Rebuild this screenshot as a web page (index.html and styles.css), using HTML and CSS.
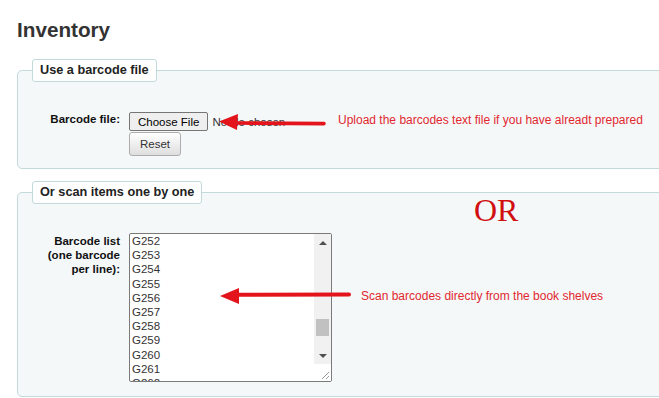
FILE: index.html
```html
<!DOCTYPE html>
<html>
<head>
<meta charset="utf-8"/>
<title>Inventory</title>
<link rel="stylesheet" href="styles.css">
</head>

<body>
<h1 class="page-title">Inventory</h1>

<fieldset class="box">
<legend>Use a barcode file</legend>
<div class="row">
   <label class="row-label" for="uploadbarcodes">Barcode file:</label>
   <div class="controls">
      <input type="file" id="uploadbarcodes" class="file-input"/>
      <button type="button" class="btn-reset">Reset</button>
   </div>
   <!-- annotation -->
   <div class="callout callout-upload">
      <svg width="110" height="18" viewBox="0 0 110 18">
         <line x1="18" y1="10" x2="107" y2="10.6" stroke="#e3141b" stroke-width="3.6" stroke-linecap="round"/>
         <polygon points="2,8.5 21,1 20,17" fill="#e3141b"/>
      </svg>
      <span class="note">Upload the barcodes text file if you have alreadt prepared</span>
   </div>
</div>
</fieldset>

<fieldset class="box box-scan">
<legend>Or scan items one by one</legend>
<div class="row">
   <label class="row-label">Barcode list (one barcode per line):</label>
   <div class="textarea">
      <div class="lines">
         <div>G252</div>
         <div>G253</div>
         <div>G254</div>
         <div>G255</div>
         <div>G256</div>
         <div>G257</div>
         <div>G258</div>
         <div>G259</div>
         <div>G260</div>
         <div>G261</div>
         <div>G262</div>
      </div>
      <div class="scrollbar">
         <div class="sb-btn"><span class="tri-up"></span></div>
         <div class="sb-track"><div class="sb-thumb"></div></div>
         <div class="sb-btn"><span class="tri-down"></span></div>
         <div class="sb-corner">
            <svg width="17" height="17" viewBox="0 0 17 17">
               <line x1="8" y1="15" x2="15" y2="8" stroke="#9a9a9a" stroke-width="1"/>
               <line x1="12" y1="15" x2="15" y2="12" stroke="#9a9a9a" stroke-width="1"/>
            </svg>
         </div>
      </div>
   </div>
   <!-- annotations -->
   <div class="or-mark">OR</div>
   <div class="callout callout-scan">
      <svg width="133" height="20" viewBox="0 0 133 20">
         <line x1="19" y1="8.8" x2="131" y2="8.5" stroke="#e3141b" stroke-width="4" stroke-linecap="round"/>
         <polygon points="2,10 21,2 21,18" fill="#e3141b"/>
      </svg>
      <span class="note">Scan barcodes directly from the book shelves</span>
   </div>
</div>
</fieldset>

</body>
</html>
```

FILE: styles.css
```css
html {
   overflow: hidden;
}

body {
   font-family: "Liberation Sans", Arial, sans-serif;
   background-color: white;
   color: #222;
   font-size: 11.5px;
   margin: 0;
   padding: 18px 0 0 17px;
}

.page-title {
   font-size: 20.7px;
   line-height: 24px;
   color: #333;
   margin: 0 0 17px 0;
}

/* fieldsets */

.box {
   width: 680px;
   margin: 0 0 12px 0;
   padding: 30px 14px 12px 14px;
   background-color: #f4f8f9;
   border: 1px solid #c3dadb;
   border-radius: 5px;
}

.box-scan {
   padding-top: 29px;
   padding-bottom: 14px;
}

.box legend {
   font-size: 12.7px;
   font-weight: bold;
   line-height: 15px;
   color: #222;
   padding: 3px 7px;
   background-color: white;
   border: 1px solid #c3dadb;
   border-radius: 3px;
}

.row {
   position: relative;
   display: flex;
   align-items: flex-start;
   gap: 9px;
}

.row-label {
   width: 88px;
   flex: none;
   text-align: right;
   font-weight: bold;
   line-height: 14px;
   color: #111;
}

.box-scan .row-label {
   padding-top: 1px;
}

.controls {
   display: flex;
   flex-direction: column;
   align-items: flex-start;
   gap: 1px;
}

/* file input */

.file-input {
   display: block;
   font-family: "Liberation Sans", Arial, sans-serif;
   font-size: 11.5px;
   color: #333;
   height: 19px;
   margin: 0;
   padding: 0;
}

.file-input::file-selector-button {
   font: inherit;
   color: #000;
   height: 19px;
   padding: 0 8px;
   margin: 0 4px 0 0;
   background-color: #efefef;
   border: 1px solid #767676;
   border-radius: 2px;
}

.btn-reset {
   font-family: "Liberation Sans", Arial, sans-serif;
   font-size: 11.5px;
   color: #333;
   height: 24px;
   padding: 0 10px;
   background: linear-gradient(#ffffff, #dedede);
   border: 1px solid #adadad;
   border-radius: 3px;
}

/* fake textarea */

.textarea {
   width: 203px;
   height: 149px;
   box-sizing: border-box;
   display: flex;
   background-color: white;
   border: 1px solid #7a7a7a;
   border-radius: 2px;
   overflow: hidden;
}

.lines {
   flex: 1;
   padding-left: 2px;
   line-height: 14.2px;
   color: #333;
   overflow: hidden;
}

.scrollbar {
   width: 17px;
   flex: none;
   display: flex;
   flex-direction: column;
   background-color: #f1f1f1;
}

.sb-btn {
   height: 17px;
   display: flex;
   align-items: center;
   justify-content: center;
}

.tri-up {
   border-left: 4px solid transparent;
   border-right: 4px solid transparent;
   border-bottom: 4px solid #505050;
}

.tri-down {
   border-left: 4px solid transparent;
   border-right: 4px solid transparent;
   border-top: 4px solid #505050;
}

.sb-track {
   flex: 1;
   padding: 68px 2px 0 2px;
}

.sb-thumb {
   height: 17px;
   background-color: #c1c1c1;
}

.sb-corner {
   height: 17px;
   background-color: white;
}

.sb-corner svg {
   display: block;
}

/* annotations drawn over the form */

.callout {
   position: absolute;
   display: flex;
   align-items: flex-start;
   color: #e2272f;
   font-size: 12px;
   line-height: 14px;
   white-space: nowrap;
}

.callout svg {
   display: block;
   flex: none;
}

.callout-upload {
   left: 185px;
   top: 1px;
   gap: 11px;
}

.callout-scan {
   left: 186px;
   top: 53px;
   gap: 10px;
}

.callout-scan .note {
   margin-top: 3px;
}

.or-mark {
   position: absolute;
   left: 442px;
   top: -39px;
   font-family: "Liberation Serif", "Times New Roman", serif;
   font-size: 32px;
   line-height: 32px;
   color: #d10f0f;
}
```
